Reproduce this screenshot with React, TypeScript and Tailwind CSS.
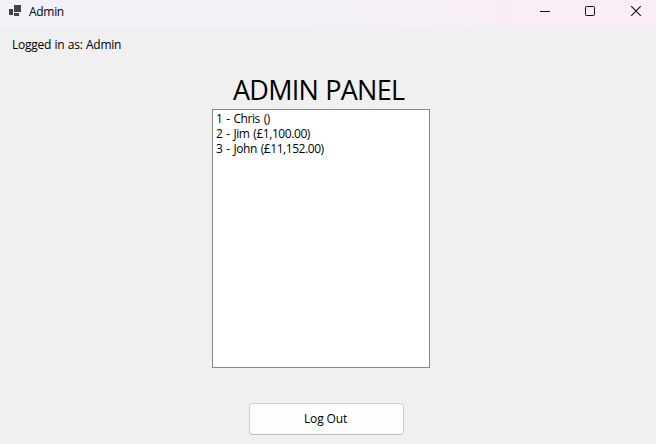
const accounts = ["1 - Chris ()", "2 - Jim (£1,100.00)", "3 - John (£11,152.00)"];

function TitleBar() {
  return (
    <header className="flex h-[27px] shrink-0 items-start bg-linear-to-r from-[#f3f1f9] via-[#f5f0f8] via-60% to-[#f9edf7] to-80%">
      <svg className="ml-[9px] mt-[5px] h-[11px] w-3 shrink-0" viewBox="0 0 12 11" fill="#444" shapeRendering="crispEdges">
        <rect x="0" y="4" width="4" height="6" />
        <rect x="5" y="0" width="7" height="7" />
        <rect x="5" y="8" width="5" height="3" />
      </svg>
      <h1 className="ml-2 mt-1 text-[12px] leading-4 tracking-[-0.3px]">Admin</h1>
      <div className="ml-auto mr-[14px] mt-[5px] flex">
        <button aria-label="Minimize" className="mr-[33px]">
          <svg className="h-3 w-3" viewBox="0 0 12 12" fill="none" stroke="#111">
            <path d="M1 6.5h10" />
          </svg>
        </button>
        <button aria-label="Maximize" className="mr-[34px]">
          <svg className="h-3 w-3" viewBox="0 0 12 12" fill="none" stroke="#111">
            <rect x="1.5" y="1.5" width="9" height="9" rx="0.8" />
          </svg>
        </button>
        <button aria-label="Close">
          <svg className="h-3 w-3" viewBox="0 0 12 12" fill="none" stroke="#111" strokeWidth="1.1">
            <path d="M1.2 1.2l9.6 9.6M10.8 1.2L1.2 10.8" />
          </svg>
        </button>
      </div>
    </header>
  );
}

export default function App() {
  return (
    <div className="flex h-[444px] w-[656px] flex-col overflow-hidden bg-[#f0f0f0] font-['Open_Sans','Noto_Sans',sans-serif] text-black">
      <TitleBar />
      <main className="flex flex-col">
        <p className="ml-3 mt-[10px] text-[12px] leading-4 tracking-[-0.26px] [word-spacing:0.6px] whitespace-nowrap">Logged in as: Admin</p>
        <h2 className="ml-[233px] mt-[19px] text-[27px] leading-9 tracking-[-0.76px] [word-spacing:1px] whitespace-nowrap">ADMIN PANEL</h2>
        <ul className="ml-[212px] mt-px h-[259px] w-[218px] border border-[#828790] bg-white pl-[3px] pt-px">
          {accounts.map((account) => (
            <li key={account} className="text-[12px] leading-[15px] tracking-[-0.43px] [word-spacing:1.1px] whitespace-nowrap">
              {account}
            </li>
          ))}
        </ul>
        <button className="ml-[249px] mt-[35px] h-8 w-[155px] rounded-[4px] border border-[#d0d0d0] border-b-[#bababa] bg-[#fdfdfd] pr-[2px] text-[12px] leading-4 tracking-[-0.15px]">
          Log Out
        </button>
      </main>
    </div>
  );
}
